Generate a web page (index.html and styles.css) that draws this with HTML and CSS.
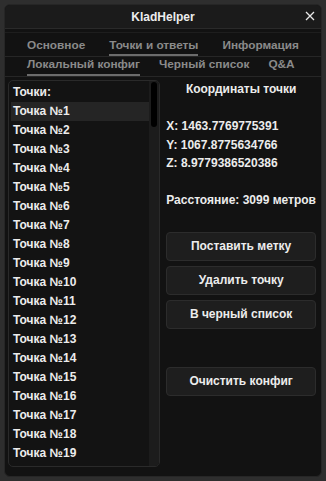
FILE: index.html
```html
<!DOCTYPE html>
<html lang="ru">
<head>
<meta charset="utf-8">
<title>KladHelper</title>
<link rel="stylesheet" href="styles.css">
</head>
<body>
<div class="window">
  <div class="titlebar">
    <span class="title">KladHelper</span>
    <svg class="close" width="10" height="10" viewBox="0 0 10 10"><path d="M1 1 L9 9 M9 1 L1 9" stroke="#e8e8e8" stroke-width="1.3" fill="none"/></svg>
  </div>
  <div class="tabs">
    <div class="tabrow row1">
      <span class="tab">Основное</span>
      <span class="tab active">Точки и ответы</span>
      <span class="tab">Информация</span>
    </div>
    <div class="tabrow row2">
      <span class="tab active">Локальный конфиг</span>
      <span class="tab">Черный список</span>
      <span class="tab">Q&amp;A</span>
    </div>
  </div>
  <div class="content">
    <div class="listbox">
      <div class="items">
        <div class="item header">Точки:</div>
        <div class="item selected">Точка №1</div>
        <div class="item">Точка №2</div>
        <div class="item">Точка №3</div>
        <div class="item">Точка №4</div>
        <div class="item">Точка №5</div>
        <div class="item">Точка №6</div>
        <div class="item">Точка №7</div>
        <div class="item">Точка №8</div>
        <div class="item">Точка №9</div>
        <div class="item">Точка №10</div>
        <div class="item">Точка №11</div>
        <div class="item">Точка №12</div>
        <div class="item">Точка №13</div>
        <div class="item">Точка №14</div>
        <div class="item">Точка №15</div>
        <div class="item">Точка №16</div>
        <div class="item">Точка №17</div>
        <div class="item">Точка №18</div>
        <div class="item">Точка №19</div>
      </div>
      <div class="scrollbar"><div class="thumb"></div></div>
    </div>
    <div class="panel">
      <div class="line center">Координаты точки</div>
      <div class="line"></div>
      <div class="line">X: 1463.7769775391</div>
      <div class="line">Y: 1067.8775634766</div>
      <div class="line">Z: 8.9779386520386</div>
      <div class="line"></div>
      <div class="line">Расстояние: 3099 метров</div>
      <div class="buttons">
        <div class="btn">Поставить метку</div>
        <div class="btn">Удалить точку</div>
        <div class="btn">В черный список</div>
        <div class="btn spaced">Очистить конфиг</div>
      </div>
    </div>
  </div>
</div>
</body>
</html>
```
FILE: styles.css
```css
html, body {
  margin: 0;
  padding: 0;
  background: #2e2e2e;
}
body {
  padding: 4px;
  font-family: "Liberation Sans", Arial, sans-serif;
  font-weight: bold;
  font-size: 12px;
  color: #e6e6e6;
}
.window {
  width: 318px;
  height: 473px;
  box-sizing: border-box;
  background: #121212;
  border: 1px solid #262626;
  border-radius: 6px;
  overflow: hidden;
  display: flex;
  flex-direction: column;
}
.titlebar {
  height: 23px;
  background: #1b1b1b;
  border-bottom: 1px solid #2a2a2a;
  display: flex;
  align-items: center;
  justify-content: center;
  position: relative;
  flex: none;
}
.title {
  color: #ececec;
  font-size: 12px;
}
.close {
  position: absolute;
  right: 6px;
  top: 6px;
}
.tabs {
  margin-top: 3px;
  border-top: 1px solid #1e1e1e;
  flex: none;
}
.tabrow {
  display: flex;
  padding-left: 22px;
  border-bottom: 1px solid #262626;
  box-sizing: border-box;
  font-size: 11.8px;
}
.row1 {
  height: 24px;
  gap: 24px;
  padding-top: 4px;
}
.row2 {
  height: 20px;
  gap: 19px;
}
.tab {
  color: #8a8a8a;
  height: 100%;
  box-sizing: border-box;
  display: flex;
  align-items: center;
  border-bottom: 2px solid transparent;
  line-height: 14px;
}
.row1 .tab {
  padding-bottom: 1px;
}
.row2 .tab {
  padding-bottom: 3px;
}
.tab.active {
  border-bottom-color: #6c6c6c;
}
.content {
  flex: 1;
  display: flex;
  padding: 3px 0 9px 3px;
  min-height: 0;
}
.listbox {
  width: 153px;
  box-sizing: border-box;
  border: 1px solid #2a2a2a;
  border-radius: 5px;
  background: #131313;
  display: flex;
  overflow: hidden;
}
.items {
  flex: 1;
  padding: 2px 0 0 2px;
  overflow: hidden;
}
.item {
  height: 19px;
  line-height: 19px;
  padding-left: 2px;
  color: #ececec;
  white-space: nowrap;
}
.item.selected {
  background: #252525;
}
.scrollbar {
  width: 10px;
  background: #1c1c1c;
  flex: none;
  padding: 1px 1px 0 2px;
  box-sizing: border-box;
}
.thumb {
  width: 6px;
  height: 45px;
  background: #000;
  border-radius: 3px;
}
.panel {
  flex: 1;
  padding: 0 5px 0 6px;
  display: flex;
  flex-direction: column;
}
.line {
  height: 18.5px;
  line-height: 18.5px;
  white-space: nowrap;
  color: #ececec;
}
.line.center {
  text-align: center;
}
.buttons {
  margin-top: 22px;
  display: flex;
  flex-direction: column;
  gap: 5px;
}
.btn {
  height: 29px;
  box-sizing: border-box;
  border: 1px solid #2c2c2c;
  border-radius: 4px;
  background: #1e1e1e;
  display: flex;
  align-items: center;
  justify-content: center;
  color: #ececec;
}
.btn.spaced {
  margin-top: 33px;
}
```
